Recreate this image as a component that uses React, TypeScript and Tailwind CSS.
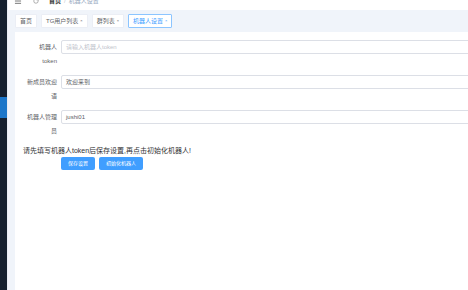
import { Menu, RotateCw } from "lucide-react";

const font = { fontFamily: '"Liberation Sans", "Noto Sans CJK SC", sans-serif' };

const tags = [
  { label: "首页", closable: false, active: false },
  { label: "TG用户列表", closable: true, active: false },
  { label: "群列表", closable: true, active: false },
  { label: "机器人设置", closable: true, active: true },
];

const fields = [
  { label: "机器人token", value: "", placeholder: "请输入机器人token" },
  { label: "新成员欢迎语", value: "欢迎来到", placeholder: "" },
  { label: "机器人管理员", value: "jushi01", placeholder: "" },
];

export default function App() {
  return (
    <div className="flex h-[290px] w-[468px] overflow-hidden bg-white" style={font}>
      {/* Sidebar */}
      <div className="w-[7px] shrink-0 bg-[#15202f] pt-[97px]">
        <div className="h-[21px] bg-[#1b76c9]" />
      </div>

      {/* Main */}
      <div className="flex min-w-0 flex-1 flex-col border-l border-[#e8edf4] bg-[#f0f4fa]">
        {/* Header (scrolled off at top) */}
        <div className="-mt-[8px] flex h-[18px] shrink-0 items-center gap-[10px] bg-white pl-[6px] text-[6px]">
          <Menu size={8} strokeWidth={2} className="text-[#333]" />
          <RotateCw size={6} strokeWidth={2} className="ml-[1px] text-[#666]" />
          <div className="flex items-center gap-[3px]">
            <span className="font-bold text-[#303133]">首页</span>
            <span className="text-[#c0c4cc]">/</span>
            <span className="text-[#97a8be]">机器人设置</span>
          </div>
        </div>

        {/* Tags view */}
        <div className="flex h-[22px] shrink-0 items-center gap-[4px] pl-[7px]">
          {tags.map((t) => (
            <div
              key={t.label}
              className={`flex h-[14px] items-center gap-[2px] rounded-[1px] border px-[4px] text-[6px] ${
                t.active ? "border-[#8cc5ff] bg-white text-[#409eff]" : "border-[#ebeef5] bg-white text-[#606266]"
              }`}
            >
              <span>{t.label}</span>
              {t.closable && <span className="text-[4px] leading-none">×</span>}
            </div>
          ))}
        </div>

        {/* Content */}
        <div className="ml-[7px] flex-1 bg-white pt-[8px]">
          {fields.map((f) => (
            <div key={f.label} className="mb-[7px] flex items-start">
              <div className="ml-[11px] w-[35px] shrink-0 pr-[4px] text-right text-[6px] leading-[14px] text-[#606266]">
                {f.label}
              </div>
              <div className="flex h-[14px] w-[440px] shrink-0 items-center rounded-[2px] border border-[#dcdfe6] px-[4px] text-[6px] text-[#606266]">
                {f.value || <span className="text-[#c0c4cc]">{f.placeholder}</span>}
              </div>
            </div>
          ))}

          <div className="ml-[8px] mt-[6px] text-[7px] leading-[11px] text-[#303133]">
            请先填写机器人token后保存设置,再点击初始化机器人!
          </div>

          <div className="ml-[46px] mt-[1px] flex gap-[4px]">
            <button className="h-[13px] rounded-[2px] bg-[#409eff] px-[7px] text-[5px] text-white">保存设置</button>
            <button className="h-[13px] rounded-[2px] bg-[#409eff] px-[7px] text-[5px] text-white">初始化机器人</button>
          </div>
        </div>
      </div>
    </div>
  );
}
